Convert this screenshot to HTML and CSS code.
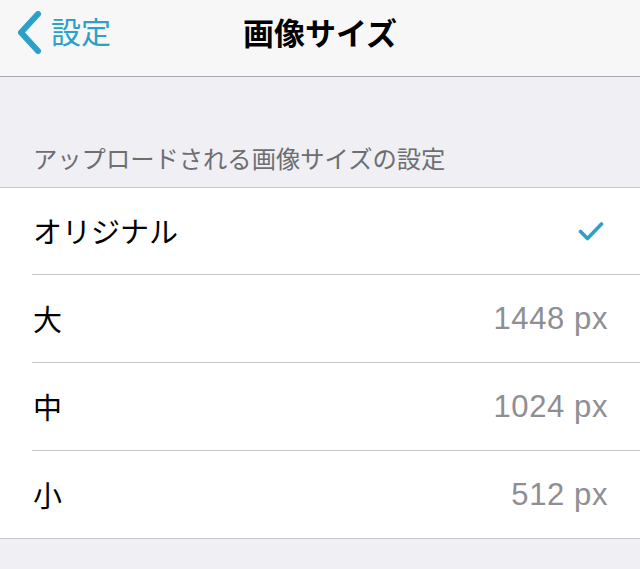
FILE: index.html
```html
<!DOCTYPE html>
<html>
<head>
    <meta charset="utf-8">
    <title>画像サイズ</title>
    <meta name="viewport" content="width=device-width, initial-scale=1">
    <link rel="stylesheet" href="styles.css">
</head>

<body>
    <header class="navbar">
        <a class="back" href="#">
            <svg class="chevron" width="28" height="44" viewBox="0 0 28 44">
                <path d="M23 3 L6 21.5 L23 40" fill="none" stroke="currentColor" stroke-width="6" stroke-linecap="round" stroke-linejoin="round"/>
            </svg>
            <span>設定</span>
        </a>
        <h1 class="title">画像サイズ</h1>
    </header>

    <section class="group">
        <p class="group-header">アップロードされる画像サイズの設定</p>
        <ul class="list">
            <li class="row">
                <span class="label">オリジナル</span>
                <svg class="check" width="26" height="21" viewBox="0 0 26 21">
                    <path d="M2.5 10.5 L9.5 17.5 L23.5 3" fill="none" stroke="currentColor" stroke-width="3.6" stroke-linecap="round" stroke-linejoin="round"/>
                </svg>
            </li>
            <li class="row">
                <span class="label">大</span>
                <span class="value">1448 px</span>
            </li>
            <li class="row">
                <span class="label">中</span>
                <span class="value">1024 px</span>
            </li>
            <li class="row">
                <span class="label">小</span>
                <span class="value">512 px</span>
            </li>
        </ul>
    </section>
</body>
</html>
```

FILE: styles.css
```css
body {
	margin: 0;
	background: #efeff4;
	font-family: "Noto Sans CJK JP", "Noto Sans", sans-serif;
	color: #000;
}

.navbar {
	position: relative;
	height: 77px;
	background: #f7f7f7;
	border-bottom: 1px solid #a9a9ad;
	display: flex;
	align-items: flex-start;
	justify-content: center;
	padding-top: 10px;
	box-sizing: border-box;
}

.back {
	position: absolute;
	left: 15px;
	top: 11px;
	display: flex;
	align-items: center;
	gap: 8px;
	color: #2ba0c8;
	text-decoration: none;
	font-size: 30px;
	line-height: 44px;
}

.back span {
	position: relative;
	top: -3px;
}

.chevron {
	display: block;
}

.title {
	margin: 0;
	font-size: 31px;
	font-weight: bold;
	line-height: 44px;
}

.group-header {
	margin: 0;
	height: 110px;
	box-sizing: border-box;
	padding: 0 33px 12px;
	display: flex;
	align-items: flex-end;
	font-size: 24.3px;
	line-height: 34px;
	color: #6d6d72;
}

.list {
	list-style: none;
	margin: 0;
	padding: 0;
	background: #fff;
	border-top: 1px solid #c8c7cc;
	border-bottom: 1px solid #c8c7cc;
}

.row {
	position: relative;
	height: 87px;
	display: flex;
	align-items: center;
	justify-content: space-between;
	padding: 0 34px 0 33px;
}

.row:first-child {
	height: 86px;
}

.row + .row {
	border-top: 1px solid #c8c7cc;
}

.row + .row::before {
	content: "";
	position: absolute;
	left: 0;
	top: -1px;
	width: 32px;
	height: 1px;
	background: #fff;
}

.label {
	font-size: 29px;
	line-height: 40px;
	position: relative;
	top: -1px;
}

.value {
	font-family: "Liberation Sans", sans-serif;
	font-size: 31px;
	letter-spacing: 0.6px;
	color: #8e8e93;
	margin-right: -2px;
}

.check {
	color: #2ba0c8;
	display: block;
	margin-right: 2px;
}
```
